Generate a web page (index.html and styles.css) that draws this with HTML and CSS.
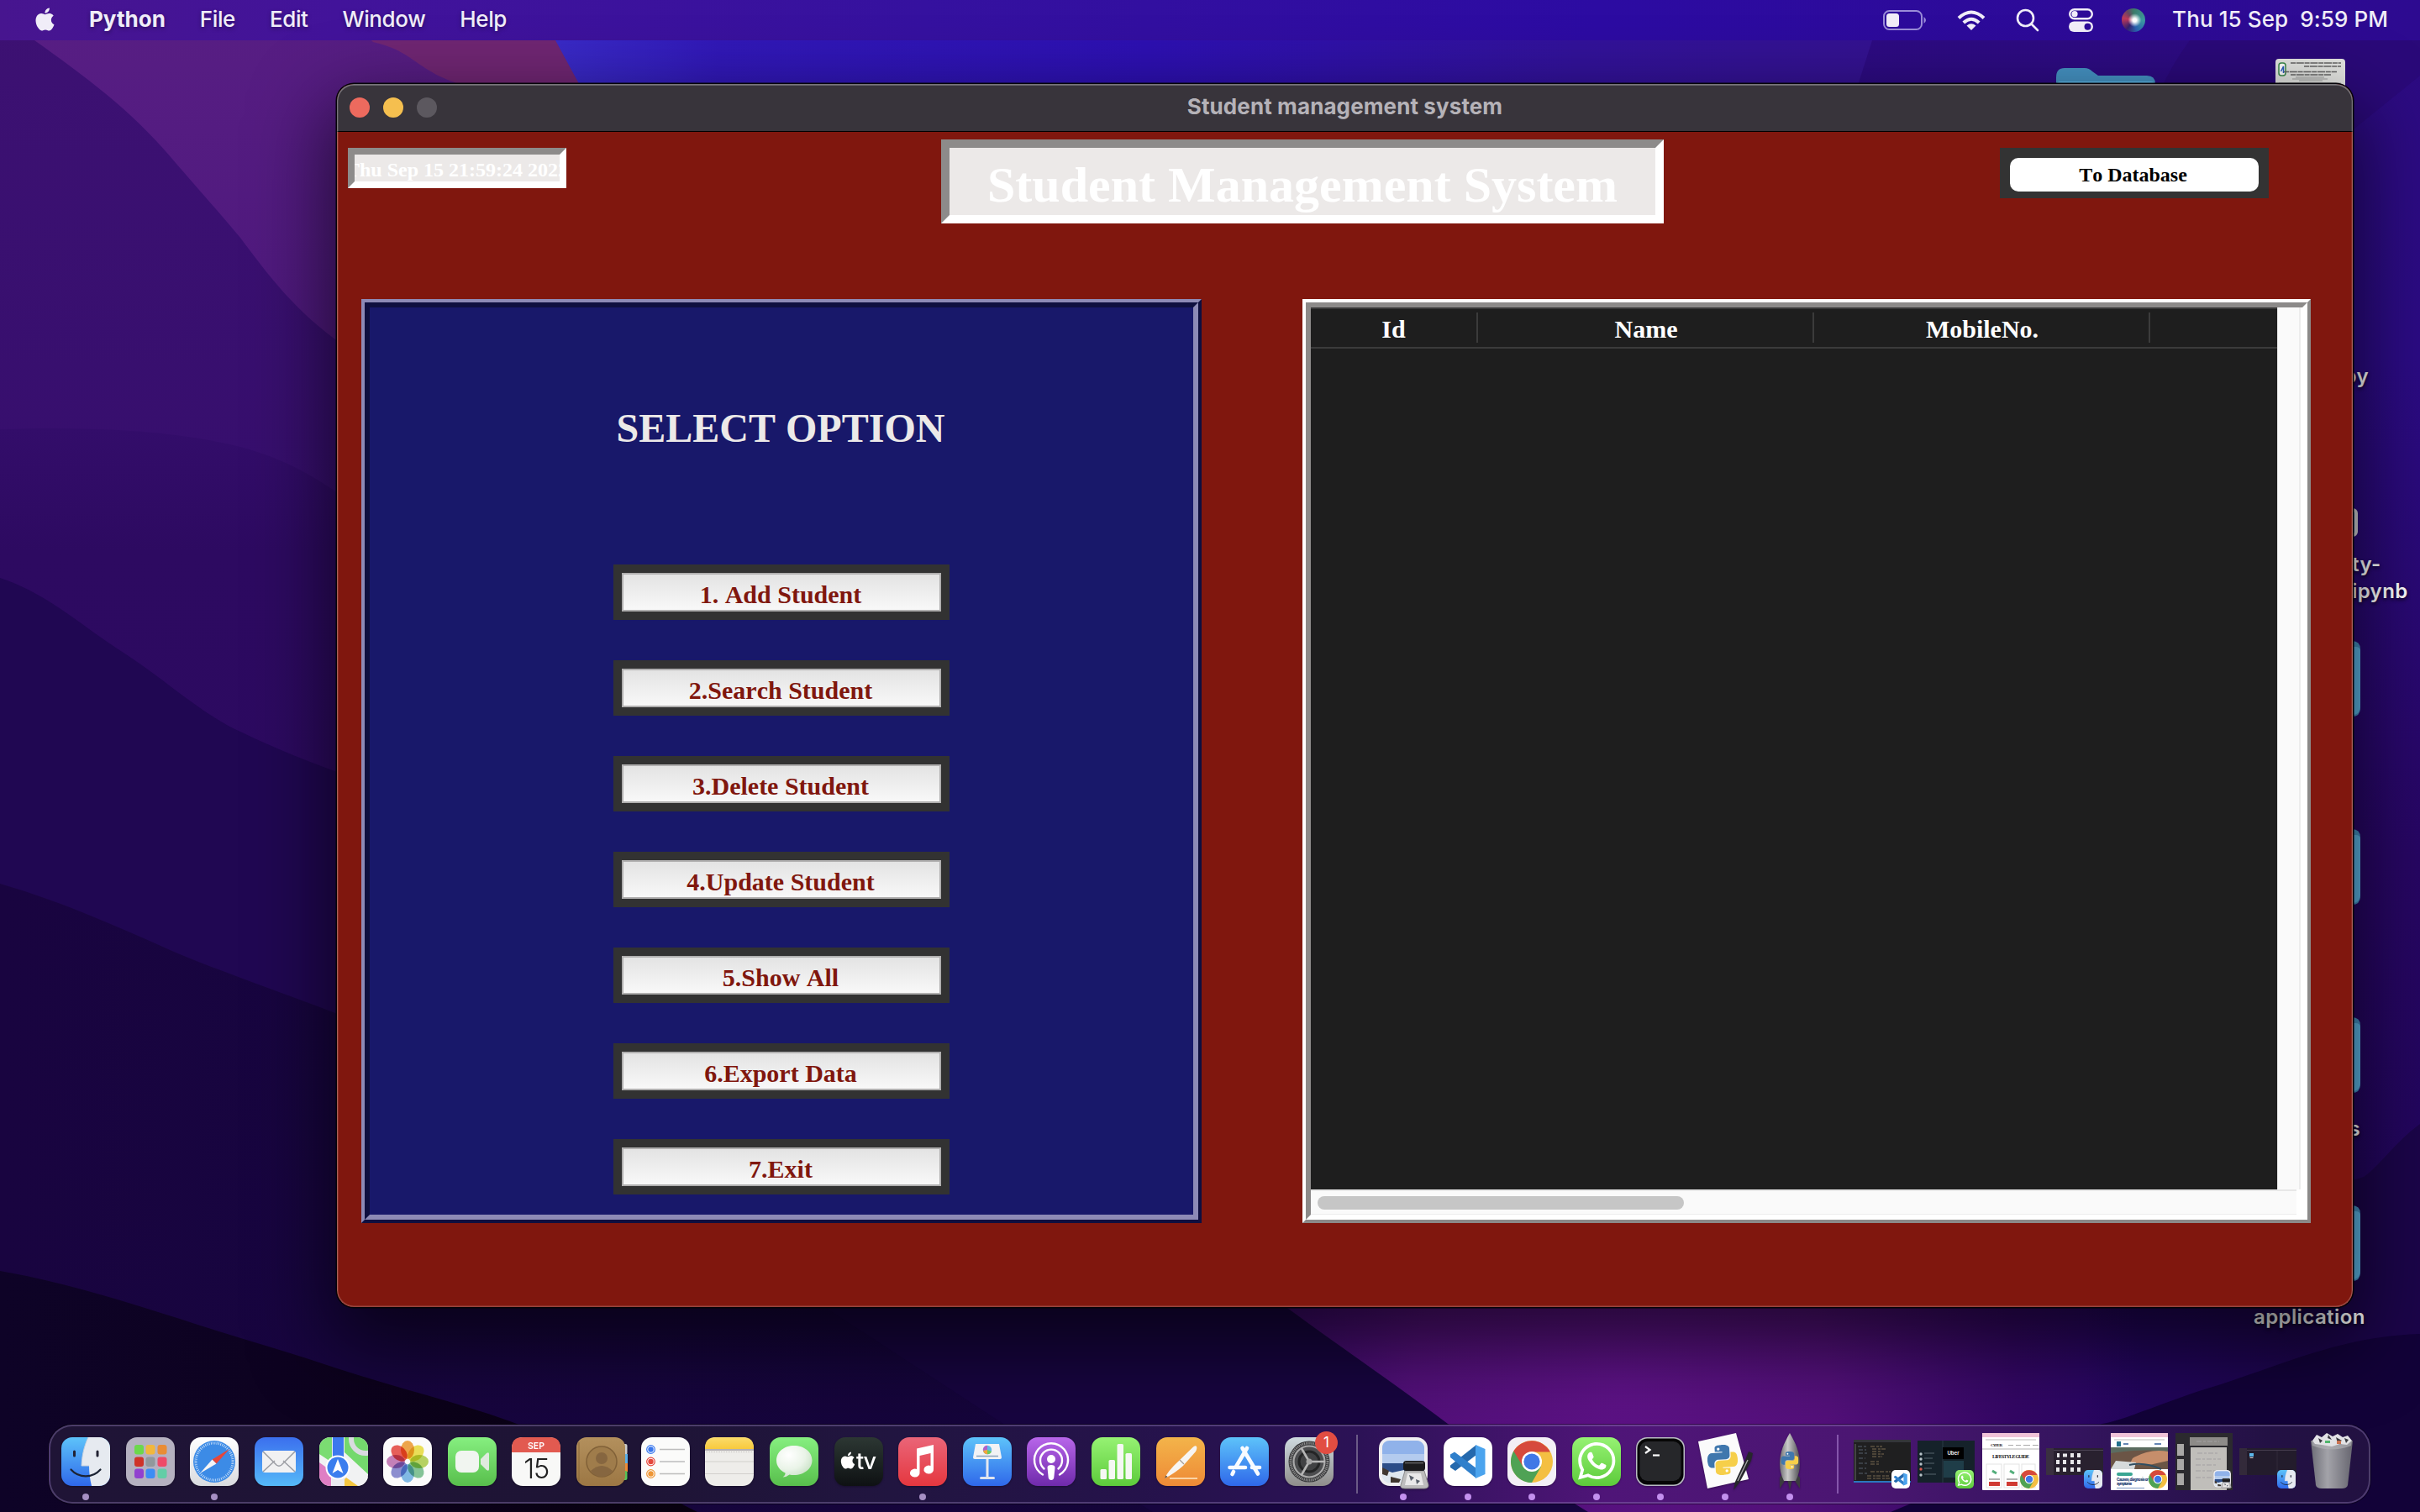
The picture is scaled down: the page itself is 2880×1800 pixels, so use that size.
FILE: index.html
```html
<!DOCTYPE html>
<html lang="en">
<head>
<meta charset="utf-8">
<title>Student management system</title>
<link rel="stylesheet" href="styles.css">
</head>
<body>
<svg class="wallpaper" viewBox="0 0 2880 1800" preserveAspectRatio="none" aria-hidden="true">
  <defs>
    <linearGradient id="wTop" x1="0" x2="1"><stop offset="0" stop-color="#3c30cc"/><stop offset=".15" stop-color="#3118b8"/><stop offset=".45" stop-color="#2d10b2"/><stop offset=".75" stop-color="#32129a"/><stop offset="1" stop-color="#34128f"/></linearGradient>
    <linearGradient id="wRight" x1="0" y1="0" x2="0" y2="1"><stop offset="0" stop-color="#2d0b82"/><stop offset=".25" stop-color="#2b0b84"/><stop offset=".6" stop-color="#270663"/><stop offset="1" stop-color="#1e0558"/></linearGradient>
    <linearGradient id="wPurple" x1="0" y1="0" x2="0" y2="1"><stop offset="0" stop-color="#581e84"/><stop offset="1" stop-color="#481678"/></linearGradient>
    <linearGradient id="wIndigo" x1="0" y1="0" x2="0" y2="1"><stop offset="0" stop-color="#3d1173"/><stop offset="1" stop-color="#350e6c"/></linearGradient>
    <linearGradient id="wBand1" x1="0" y1="0" x2="0" y2="1"><stop offset="0" stop-color="#330d6a"/><stop offset=".3" stop-color="#2d0a61"/><stop offset="1" stop-color="#2c0a60"/></linearGradient>
    <linearGradient id="wBand3" x1="0" y1="0" x2="1" y2="0"><stop offset="0" stop-color="#190440"/><stop offset=".25" stop-color="#17053f"/><stop offset="1" stop-color="#130436"/></linearGradient>
    <linearGradient id="wBand4" x1="0" y1="0" x2="1" y2="0"><stop offset="0" stop-color="#0e0327"/><stop offset=".4" stop-color="#0d0220"/><stop offset="1" stop-color="#08010f"/></linearGradient>
    <linearGradient id="wCorner" gradientUnits="userSpaceOnUse" x1="2480" y1="0" x2="2780" y2="0"><stop offset="0" stop-color="#1b0549" stop-opacity="0"/><stop offset="1" stop-color="#1b0549"/></linearGradient>
    <radialGradient id="wMag" gradientUnits="userSpaceOnUse" cx="1930" cy="1650" r="620"><stop offset="0" stop-color="#5d1286"/><stop offset=".4" stop-color="#521079"/><stop offset=".75" stop-color="#330764"/><stop offset="1" stop-color="#230560"/></radialGradient>
  </defs>
  <rect width="2880" height="1800" fill="#1b0645"/>
  <rect x="600" width="1700" height="400" fill="url(#wTop)"/>
  <path d="M2234 0L2228 48L2205 120V1700H2880V0Z" fill="url(#wRight)"/>
  <path d="M2640 0L2606 48Q2560 110 2530 220L2620 300 2880 90V0Z" fill="#270870" opacity=".5"/>
  <path d="M0 0H650L661 48L700 120V600H0Z" fill="#702673"/>
  <path d="M0 0H390L444 50C490 60 495 82 541 98L640 180V620H0Z" fill="url(#wPurple)"/>
  <path d="M0 0H15L41 48C100 90 155 130 204 188C240 230 262 254 286 283C320 328 350 370 410 412V700H0Z" fill="url(#wIndigo)"/>
  <path d="M0 511C90 508 200 510 286 532C340 546 380 570 420 600V1000H0Z" fill="url(#wBand1)"/>
  <path d="M0 688C60 708 100 748 153 781C200 812 240 850 286 871C330 892 370 908 420 926V1300H0Z" fill="#200752"/>
  <path d="M0 1052C80 1075 150 1108 214 1136C280 1163 350 1187 420 1214H1700V1800H0Z" fill="url(#wBand3)"/>
  <path d="M0 1513C80 1527 150 1550 214 1570C280 1592 340 1608 398 1628C470 1652 540 1668 607 1692C680 1718 760 1765 830 1800H0Z" fill="url(#wBand4)"/>
  <path d="M880 1480L983 1557L1194 1695L1359 1792L1372 1800H1900V1480Z" fill="#17053f"/>
  <path d="M1440 1480L1532 1557C1590 1600 1650 1640 1723 1695L1877 1792L1890 1800H2880V1400L2200 1480Z" fill="url(#wMag)"/>
  <path d="M2880 1338C2850 1360 2830 1390 2813 1401L2480 1500V1800H2880Z" fill="url(#wCorner)"/>
  <path d="M2880 1588C2830 1590 2795 1598 2755 1610S2670 1640 2627 1653S2530 1690 2502 1695L2250 1800H2880Z" fill="#120238"/>
</svg>

<svg class="defs" width="0" height="0" aria-hidden="true">
  <defs>
    <linearGradient id="gBlueUp" x1="0" y1="0" x2="0" y2="1"><stop offset="0" stop-color="#3b6fee"/><stop offset="1" stop-color="#55b9f8"/></linearGradient>
    <linearGradient id="gBlueDn" x1="0" y1="0" x2="0" y2="1"><stop offset="0" stop-color="#5dc3fa"/><stop offset="1" stop-color="#2f68ea"/></linearGradient>
    <linearGradient id="gWhite" x1="0" y1="0" x2="0" y2="1"><stop offset="0" stop-color="#fff"/><stop offset="1" stop-color="#d9dbdf"/></linearGradient>
    <linearGradient id="gGreen" x1="0" y1="0" x2="0" y2="1"><stop offset="0" stop-color="#86ef80"/><stop offset="1" stop-color="#58bf4c"/></linearGradient>
    <linearGradient id="gLime" x1="0" y1="0" x2="0" y2="1"><stop offset="0" stop-color="#96f273"/><stop offset="1" stop-color="#5dcb3b"/></linearGradient>
    <linearGradient id="gRed" x1="0" y1="0" x2="0" y2="1"><stop offset="0" stop-color="#ea6578"/><stop offset="1" stop-color="#e5373f"/></linearGradient>
    <linearGradient id="gOrange" x1="0" y1="0" x2="0" y2="1"><stop offset="0" stop-color="#f3b44a"/><stop offset="1" stop-color="#ee8a36"/></linearGradient>
    <linearGradient id="gPurple" x1="0" y1="0" x2="0" y2="1"><stop offset="0" stop-color="#b866ea"/><stop offset="1" stop-color="#6f2aab"/></linearGradient>
    <linearGradient id="gDark" x1="0" y1="0" x2="0" y2="1"><stop offset="0" stop-color="#2c3733"/><stop offset="1" stop-color="#0e1113"/></linearGradient>
    <linearGradient id="gTan" x1="0" y1="0" x2="0" y2="1"><stop offset="0" stop-color="#b3905d"/><stop offset="1" stop-color="#9c7744"/></linearGradient>
    <linearGradient id="gGrey" x1="0" y1="0" x2="0" y2="1"><stop offset="0" stop-color="#cfdbe0"/><stop offset="1" stop-color="#8f8d8b"/></linearGradient>
    <linearGradient id="gMetal" x1="0" y1="0" x2="1" y2="0"><stop offset="0" stop-color="#6c6c70"/><stop offset=".4" stop-color="#cacaca"/><stop offset="1" stop-color="#4e4e52"/></linearGradient>
    <linearGradient id="gYellow" x1="0" y1="0" x2="0" y2="1"><stop offset="0" stop-color="#fbdc6b"/><stop offset="1" stop-color="#f8c93d"/></linearGradient>
    <linearGradient id="gCan" x1="0" y1="0" x2="1" y2="0"><stop offset="0" stop-color="#6d6d76"/><stop offset=".4" stop-color="#a3a3a9"/><stop offset="1" stop-color="#66656f"/></linearGradient>
    <radialGradient id="gBall" cx=".35" cy=".3" r=".9"><stop offset="0" stop-color="#fff"/><stop offset=".5" stop-color="#eaf4e8"/><stop offset="1" stop-color="#b9d8b5"/></radialGradient>
    <clipPath id="squircle"><rect width="58" height="58" rx="13"/></clipPath>

    <symbol id="apple" viewBox="0 0 24 24"><path d="M12.152 6.896c-.948 0-2.415-1.078-3.96-1.04-2.04.027-3.91 1.183-4.961 3.014-2.117 3.675-.546 9.103 1.519 12.09 1.013 1.454 2.208 3.09 3.792 3.039 1.52-.065 2.09-.987 3.935-.987 1.831 0 2.35.987 3.96.948 1.637-.026 2.676-1.48 3.676-2.948 1.156-1.688 1.636-3.325 1.662-3.415-.039-.013-3.182-1.221-3.22-4.857-.026-3.04 2.48-4.494 2.597-4.559-1.429-2.09-3.623-2.324-4.39-2.376-2-.156-3.675 1.09-4.61 1.09zM15.53 3.83c.843-1.012 1.4-2.427 1.245-3.83-1.207.052-2.662.805-3.532 1.818-.78.896-1.454 2.338-1.273 3.714 1.338.104 2.715-.688 3.559-1.701"/></symbol>
    <symbol id="pysnake" viewBox="0 0 24 24"><path d="M14.25.18l.9.2.73.26.59.3.45.32.34.34.25.34.16.33.1.3.04.26.02.2-.01.13V8.5l-.05.63-.13.55-.21.46-.26.38-.3.31-.33.25-.35.19-.35.14-.33.1-.3.07-.26.04-.21.02H8.77l-.69.05-.59.14-.5.22-.41.27-.33.32-.27.35-.2.36-.15.37-.1.35-.07.32-.04.27-.02.21v3.06H3.17l-.21-.03-.28-.07-.32-.12-.35-.18-.36-.26-.36-.36-.35-.46-.32-.59-.28-.73-.21-.88-.14-1.05-.05-1.23.06-1.22.16-1.04.24-.87.32-.71.36-.57.4-.44.42-.33.42-.24.4-.16.36-.1.32-.05.24-.01h.16l.06.01h8.16v-.83H6.18l-.01-2.75-.02-.37.05-.34.11-.31.17-.28.25-.26.31-.23.38-.2.44-.18.51-.15.58-.12.64-.1.71-.06.77-.04.84-.02 1.27.05z"/></symbol>
    <symbol id="python" viewBox="0 0 24 24"><use href="#pysnake" fill="#3f77ad"/><g transform="rotate(180 12 12)"><use href="#pysnake" fill="#f6cf4a"/><circle cx="9" cy="3.2" r="1.1" fill="#fff"/></g><circle cx="9" cy="3.2" r="1.1" fill="#fff"/></symbol>
    <symbol id="finder" viewBox="0 0 58 58"><g clip-path="url(#squircle)"><rect width="58" height="58" fill="url(#gBlueDn)"/><path d="M32 0C27 11 24.500 22 24 34H33C33 42 34 50 36 58H58V0Z" fill="#e6eaf0"/><path d="M32 0C27 11 24.500 22 24 34H33" fill="none" stroke="#c8d2de" stroke-width="1"/></g><path d="M15.500 17V22M43 17V22" stroke="#223" stroke-width="3" stroke-linecap="round"/><path d="M11.500 38.500C21 49 37 49 46.500 38.500" fill="none" stroke="#1c2333" stroke-width="2.200" stroke-linecap="round"/></symbol>
    <symbol id="vscode" viewBox="0 0 58 58"><rect width="58" height="58" rx="13" fill="#fff"/><path d="M39 9V21L14 40L8 36V33.500Z" fill="#2569ad"/><path d="M8 20.500L13 17.500L39 37V49L8 24Z" fill="#2f7fcb"/><path d="M38 9L49.500 14V44L38 49Z" fill="#4ba4ee"/></symbol>
    <symbol id="chromeball" viewBox="0 0 50 50"><circle cx="25" cy="25" r="25" fill="#f4bf42"/><path d="M25 25L3.350 12.500A25 25 0 0 0 25 50L36 31Z" fill="#4fa255"/><path d="M25 13.500H46.800A25 25 0 0 0 3.350 12.500L14.500 31Z" fill="#d64a3c"/><circle cx="25" cy="25" r="12" fill="#fff"/><circle cx="25" cy="25" r="9.600" fill="#4078e6"/></symbol>
    <symbol id="whatsapp" viewBox="0 0 58 58"><rect width="58" height="58" rx="13" fill="url(#gLime)"/><path transform="translate(7 6) scale(1.850)" fill="#fff" d="M17.472 14.382c-.297-.149-1.758-.867-2.030-.967-.273-.099-.471-.148-.670.150-.197.297-.767.966-.940 1.164-.173.199-.347.223-.644.075-.297-.150-1.255-.463-2.390-1.475-.883-.788-1.480-1.761-1.653-2.059-.173-.297-.018-.458.130-.606.134-.133.298-.347.446-.520.149-.174.198-.298.298-.497.099-.198.050-.371-.025-.520-.075-.149-.669-1.612-.916-2.207-.242-.579-.487-.500-.669-.510-.173-.008-.371-.010-.570-.010-.198 0-.520.074-.792.372-.272.297-1.040 1.016-1.040 2.479 0 1.462 1.065 2.875 1.213 3.074.149.198 2.096 3.200 5.077 4.487.709.306 1.262.489 1.694.625.712.227 1.360.195 1.871.118.571-.085 1.758-.719 2.006-1.413.248-.694.248-1.289.173-1.413-.074-.124-.272-.198-.570-.347m-5.421 7.403h-.004a9.870 9.870 0 01-5.031-1.378l-.361-.214-3.741.982.998-3.648-.235-.374a9.860 9.860 0 01-1.510-5.260c.001-5.450 4.436-9.884 9.888-9.884 2.640 0 5.122 1.030 6.988 2.898a9.825 9.825 0 012.893 6.994c-.003 5.450-4.437 9.884-9.885 9.884m8.413-18.297A11.815 11.815 0 0012.050 0C5.495 0 .160 5.335.157 11.892c0 2.096.547 4.142 1.588 5.945L.057 24l6.305-1.654a11.882 11.882 0 005.683 1.448h.005c6.554 0 11.890-5.335 11.893-11.893a11.821 11.821 0 00-3.480-8.413z"/></symbol>
    <symbol id="preview" viewBox="0 0 60 62"><rect width="58" height="58" rx="13" fill="#f0eff2"/><rect x="4" y="4" width="50" height="50" rx="9" fill="#b4cbee"/><path d="M4 13C4 7 8 4 13 4H45C50 4 54 8 54 13V20H4Z" fill="#90b2ea"/><path d="M4 31H54V45H4Z" fill="#2c4d88"/><path d="M4 38L16 42L30 39L36 54H13C8 54 4 50 4 45Z" fill="#dfe7ee"/><path d="M4 36L12 40L10 46L4 44ZM14 47L26 50L24 54H14Z" fill="#40372f"/><path d="M31 40H54L59 57Q59 61 54 61H31Q25 61 26 57Z" fill="#bdbdbd" stroke="#8d8d8d"/><path d="M34 43H50L53 57H31Z" fill="#e9e9e9"/><path d="M36 45L42 48L38 52ZM44 50L49 52L45 56ZM33 53L38 55" fill="#59606b"/><rect x="29" y="28" width="26" height="12" rx="3.500" fill="#1b1b1d"/><path d="M31 30.500H53" stroke="#555" stroke-width="2"/></symbol>
    <symbol id="folder" viewBox="0 0 118 100"><path d="M0 12Q0 1 10 1H34Q39 1 43 5L50 10H108Q118 10 118 20V90Q118 100 108 100H10Q0 100 0 90Z" fill="#4593c4"/><path d="M0 22Q0 17 6 17H112Q118 17 118 22V88Q118 98 108 98H10Q0 98 0 88Z" fill="#5eb9e9"/></symbol>
  </defs>
</svg>

<div class="desk-items">
  <svg class="desk-folder f0"><use href="#folder"/></svg>
  <svg class="desk-doc" viewBox="0 0 83 60"><rect width="83" height="70" rx="4" fill="#e4e5e2"/><rect x="4" y="5" width="8" height="15" rx="3" fill="#fff" stroke="#3b8a4a" stroke-width="1.500"/><path d="M6.500 15L9.500 9V17" fill="none" stroke="#2b5fc0" stroke-width="1.500"/><g stroke="#666" stroke-width="1.400" stroke-dasharray="6 .8 9 .8"><path d="M18 5H78M34 9H78M10 15.500H73M18 19H66" /></g><g stroke="#999" stroke-width=".9"><path d="M24 22H58M20 24H62M28 26H56M4 29H78"/></g></svg>
  <svg class="desk-folder f1"><use href="#folder"/></svg>
  <svg class="desk-folder f2"><use href="#folder"/></svg>
  <svg class="desk-folder f3"><use href="#folder"/></svg>
  <svg class="desk-folder f4"><use href="#folder"/></svg>
  <span class="desk-drive"></span>
  <span class="desk-label l1">py</span>
  <span class="desk-label l2">ty-<br>ipynb</span>
  <span class="desk-label l3">s</span>
  <span class="desk-label l4">application</span>
</div>

<header class="menubar">
  <nav class="menus">
    <svg class="apple-logo"><use href="#apple"/></svg>
    <span class="app-name">Python</span><span>File</span><span>Edit</span><span>Window</span><span>Help</span>
  </nav>
  <div class="status">
    <svg width="52" height="24" viewBox="0 0 52 24"><rect x="1" y="1" width="45" height="22" rx="6.500" fill="none" stroke="#9a8cd8" stroke-width="2"/><path d="M48.500 8Q51 10 51 12T48.500 16Z" fill="#9a8cd8"/><rect x="4" y="4" width="15" height="16" rx="3.500" fill="#f0edf8"/></svg>
    <svg class="wifi" width="34" height="25" viewBox="0 0 34 25" fill="none" stroke="#f0edf8" stroke-width="4"><path d="M2 9.500Q17-4.500 32 9.500M7.800 15Q17 6.500 26.200 15"/><path d="M17 24L11.500 18.500Q17 14 22.500 18.500Z" fill="#f0edf8" stroke="none"/></svg>
    <svg class="search" width="28" height="28" viewBox="0 0 28 28" fill="none" stroke="#f0edf8" stroke-width="2.600" stroke-linecap="round"><circle cx="11.500" cy="11.500" r="9.500"/><path d="M18.500 18.500L26 26"/></svg>
    <svg class="control" width="29" height="28" viewBox="0 0 29 28"><rect x="1.200" y="1.200" width="26.600" height="11" rx="5.500" fill="none" stroke="#f0edf8" stroke-width="2.400"/><circle cx="7" cy="6.700" r="3.600" fill="#f0edf8"/><rect y="15.500" width="29" height="12.500" rx="6.200" fill="#f0edf8"/><circle cx="22.500" cy="21.700" r="4" fill="#2c0b98"/></svg>
    <span class="siri"></span>
    <span class="clock">Thu 15 Sep&nbsp; 9:59 PM</span>
  </div>
</header>

<main class="window">
  <div class="titlebar">
    <div class="lights"><i class="close"></i><i class="mini"></i><i class="full"></i></div>
    <h1>Student management system</h1>
  </div>
  <div class="client">
    <div class="top">
      <div class="stamp"><span>Thu Sep 15 21:59:24 2022</span></div>
      <div class="banner">Student Management System</div>
      <div class="db-wrap"><button class="db">To Database</button></div>
    </div>
    <div class="panels">
      <section class="ridge blue"><div class="ridge-in options">
        <h2>SELECT OPTION</h2>
        <div class="buttons">
          <button>1. Add Student</button>
          <button>2.Search Student</button>
          <button>3.Delete Student</button>
          <button>4.Update Student</button>
          <button>5.Show All</button>
          <button>6.Export Data</button>
          <button>7.Exit</button>
        </div>
      </div></section>
      <section class="ridge white"><div class="ridge-in tree">
        <div class="table">
          <div class="thead"><span class="id">Id</span><span>Name</span><span>MobileNo.</span></div>
        </div>
        <div class="vbar"></div>
        <div class="hbar"><div class="thumb"></div></div>
      </div></section>
    </div>
  </div>
</main>

<footer class="dock">
  <div class="group">
    <div class="slot run"><svg viewBox="0 0 58 58"><use href="#finder"/></svg></div>
    <div class="slot"><svg viewBox="0 0 58 58"><rect width="58" height="58" rx="13" fill="#b5b1c0"/><g><rect x="10" y="9" width="11" height="11.500" rx="3" fill="#6cd84c"/><rect x="23.500" y="9" width="11" height="11.500" rx="3" fill="#f1b73d"/><rect x="37.500" y="9" width="11" height="11.500" rx="3" fill="#e98c35"/><rect x="10" y="23.500" width="11" height="11.500" rx="3" fill="#cf3329"/><rect x="23.500" y="23.500" width="11" height="11.500" rx="3" fill="#91989c"/><rect x="37.500" y="23.500" width="11" height="11.500" rx="3" fill="#ee4a68"/><rect x="10" y="37.500" width="11" height="11.500" rx="3" fill="#9141cf"/><rect x="23.500" y="37.500" width="11" height="11.500" rx="3" fill="#3c8df5"/><rect x="37.500" y="37.500" width="11" height="11.500" rx="3" fill="#63cda6"/></g></svg></div>
    <div class="slot run"><svg viewBox="0 0 58 58"><rect width="58" height="58" rx="13" fill="url(#gWhite)"/><circle cx="29" cy="29" r="25" fill="#3c8be6"/><circle cx="29" cy="29" r="22" fill="none" stroke="#d9e9fb" stroke-width="3" stroke-dasharray=".8 1.500"/><path d="M47 14L31.500 31.500L26.500 26.500Z" fill="#e6463b"/><path d="M12 43L26.500 26.500L31.500 31.500Z" fill="#f4f4f6"/></svg></div>
    <div class="slot"><svg viewBox="0 0 58 58"><rect width="58" height="58" rx="13" fill="url(#gBlueUp)"/><rect x="9" y="16" width="40" height="26" rx="3.500" fill="#f1f1f2"/><path d="M10 41L24 28M48 41L34 28M10 17L26 33Q29 35.500 32 33L48 17" fill="none" stroke="#9b9da3" stroke-width="1.500"/></svg></div>
    <div class="slot"><svg viewBox="0 0 58 58"><g clip-path="url(#squircle)"><rect width="58" height="58" fill="#f1f2f3"/><path d="M0 0H15V30L0 20Z" fill="#7bdc72"/><path d="M0 30L14 40V58H0Z" fill="#df7fc4"/><path d="M30 0H58V44L30 18Z" fill="#74d96d"/><path d="M30 24L58 48V58H30Z" fill="#f1f2f3"/><path d="M32 48L46 58H30V50Z" fill="#f5c741"/><path d="M15 0H30V58H15Z" fill="#e9ebf0"/><path d="M16 0H29V30H16Z" fill="#3c79ee"/><circle cx="55" cy="2" r="17" fill="none" stroke="#d9dbe0" stroke-width="6"/></g><circle cx="22" cy="36" r="14.500" fill="#fff"/><circle cx="22" cy="36" r="12.500" fill="#3b7eee"/><path d="M22 26L28.500 43L22 39L15.500 43Z" fill="#fff"/></svg></div>
    <div class="slot"><svg viewBox="0 0 58 58"><rect width="58" height="58" rx="13" fill="#fbfbfb"/><g class="petals" transform="translate(29 29)"><ellipse cy="-14" rx="8" ry="11" fill="#f0a13c"/><ellipse cy="-14" rx="8" ry="11" fill="#ece04a" transform="rotate(45)"/><ellipse cy="-14" rx="8" ry="11" fill="#b3d255" transform="rotate(90)"/><ellipse cy="-14" rx="8" ry="11" fill="#7cc191" transform="rotate(135)"/><ellipse cy="-14" rx="8" ry="11" fill="#78b6e6" transform="rotate(180)"/><ellipse cy="-14" rx="8" ry="11" fill="#8487cf" transform="rotate(225)"/><ellipse cy="-14" rx="8" ry="11" fill="#c277b5" transform="rotate(270)"/><ellipse cy="-14" rx="8" ry="11" fill="#e9524c" transform="rotate(315)"/></g></svg></div>
    <div class="slot"><svg viewBox="0 0 58 58"><rect width="58" height="58" rx="13" fill="url(#gGreen)"/><rect x="9" y="16" width="28" height="26" rx="7" fill="#f1f5f0"/><path d="M39 26L46 19Q49 17 49 20V38Q49 41 46 39L39 32Z" fill="#e0eade"/></svg></div>
    <div class="slot"><svg viewBox="0 0 58 58"><rect width="58" height="58" rx="13" fill="#f8f8f7"/><path d="M0 18V13Q0 0 13 0H45Q58 0 58 13V18Z" fill="#e25a50"/><text x="29" y="14" text-anchor="middle" class="i-sep">SEP</text><text x="29" y="49" text-anchor="middle" class="i-day">15</text></svg></div>
    <div class="slot"><svg class="wide" viewBox="0 0 62 58"><rect x="52" y="8" width="8.500" height="13" rx="2" fill="#ccc"/><rect x="52" y="20" width="9" height="11" fill="#5bb0e8"/><rect x="52" y="31" width="9" height="10" fill="#ee8b35"/><rect x="52" y="40" width="8.500" height="11" rx="2" fill="#58c456"/><rect width="58" height="58" rx="12" fill="url(#gTan)"/><path d="M3 6V52" stroke="#8a6838" stroke-width="1"/><circle cx="30" cy="29" r="18" fill="#9f7c4b" stroke="#816138" stroke-width="1.500"/><circle cx="30" cy="25" r="7" fill="#866640"/><path d="M17 40Q30 28 43 40Q38 47 30 47T17 40Z" fill="#866640"/></svg></div>
    <div class="slot"><svg viewBox="0 0 58 58"><rect width="58" height="58" rx="13" fill="#fbfbfa"/><path d="M22 14.500H52M22 29H52M22 43.500H52" stroke="#bdbdbd" stroke-width="1.300"/><g fill="#fff" stroke-width="1.200"><circle cx="11.500" cy="14.500" r="4.800" stroke="#3a78ee"/><circle cx="11.500" cy="29" r="4.800" stroke="#e5483d"/><circle cx="11.500" cy="43.500" r="4.800" stroke="#ee9636"/></g><circle cx="11.500" cy="14.500" r="3.200" fill="#3a78ee"/><circle cx="11.500" cy="29" r="3.200" fill="#e5483d"/><circle cx="11.500" cy="43.500" r="3.200" fill="#ee9636"/></svg></div>
    <div class="slot"><svg viewBox="0 0 58 58"><rect width="58" height="58" rx="13" fill="#eeedea"/><path d="M0 14V13Q0 0 13 0H45Q58 0 58 13V14Z" fill="url(#gYellow)"/><path d="M0 15H58" stroke="#b3b0b2" stroke-width="2"/><path d="M1 17.500H57" stroke="#c4c1bd" stroke-width="1" stroke-dasharray="1 1"/><path d="M0 29H58M0 43.500H58" stroke="#d2d0cc"/></svg></div>
    <div class="slot"><svg viewBox="0 0 58 58"><rect width="58" height="58" rx="13" fill="url(#gGreen)"/><path d="M29 10C41 10 50.500 17.500 50.500 27.500S41 45 29 45Q26 45 23.500 44.500Q20 47.500 15.500 47.500Q19 45 18.500 42.500C12 39.500 8 34 8 27.500C8 17.500 17 10 29 10Z" fill="url(#gBall)"/></svg></div>
    <div class="slot"><svg viewBox="0 0 58 58"><rect width="58" height="58" rx="13" fill="url(#gDark)"/><use href="#apple" x="6" y="17" width="20" height="21" fill="#fff"/><text x="26" y="38" class="i-tv" textLength="24">tv</text></svg></div>
    <div class="slot run"><svg viewBox="0 0 58 58"><rect width="58" height="58" rx="13" fill="url(#gRed)"/><path d="M22 13.500L42 9V38A5.800 5 0 1 1 38.500 34V19L25.500 22V42A5.800 5 0 1 1 22 38Z" fill="#fff"/></svg></div>
    <div class="slot"><svg viewBox="0 0 58 58"><rect width="58" height="58" rx="13" fill="url(#gBlueDn)"/><path d="M15 8H43L46 24Q46 26 44 26H14Q12 26 12 24Z" fill="#f1f2f5"/><path d="M16 22.500H42" stroke="#8aa3bf" stroke-width="1.500"/><circle cx="29" cy="15" r="5.200" fill="#5fb7e8"/><path d="M29 15V9.800A5.200 5.200 0 0 0 24 16Z" fill="#b25fc9"/><path d="M29 15L24 16A5.200 5.200 0 0 0 29 20.200Z" fill="#f1a43d"/><path d="M29 15V20.200A5.200 5.200 0 0 0 34 17Z" fill="#6ccb5d"/><path d="M29 26V48" stroke="#e4e8f0" stroke-width="3"/><rect x="20" y="47" width="18" height="3" rx="1.500" fill="#dfe4ee"/></svg></div>
    <div class="slot"><svg viewBox="0 0 58 58"><rect width="58" height="58" rx="13" fill="url(#gPurple)"/><g fill="none" stroke="#fff" stroke-width="2.400" stroke-linecap="round"><path d="M19 44.500A20 20 0 1 1 39 44.500"/><path d="M20.500 37.500A13 13 0 1 1 37.500 37.500"/></g><circle cx="29" cy="26" r="5" fill="#fff"/><path d="M24.500 36Q24.500 33 29 33T33.500 36L32.300 48Q31.800 51 29 51T25.700 48Z" fill="#fff"/></svg></div>
    <div class="slot"><svg viewBox="0 0 58 58"><rect width="58" height="58" rx="13" fill="url(#gLime)"/><g fill="#f5f8f3"><rect x="10.500" y="38" width="7.500" height="12" rx="1.500"/><rect x="20.500" y="27" width="7.500" height="23" rx="1.500"/><rect x="30.500" y="8" width="7.500" height="42" rx="1.500"/><rect x="40.500" y="19" width="7.500" height="31" rx="1.500"/></g></svg></div>
    <div class="slot"><svg viewBox="0 0 58 58"><rect width="58" height="58" rx="13" fill="url(#gOrange)"/><path d="M16 49H49" stroke="#fbd4a4" stroke-width="2"/><path d="M43 12.500Q46.500 9 48 11Q49 13 47 17L32 34Q22 43 10 49Q14 40 26 29Z" fill="#f7f5f2"/><path d="M28 27L33 32" stroke="#a39c95" stroke-width="1.200"/><path d="M10 49L11.500 45.500L13.500 47Z" fill="#554b44"/></svg></div>
    <div class="slot"><svg viewBox="0 0 58 58"><rect width="58" height="58" rx="13" fill="url(#gBlueDn)"/><g stroke="#f8fbff" stroke-width="4.600" stroke-linecap="round"><path d="M26.500 13L45 43.500M32 13L19 35M16 41L14.500 44M11.500 36H30M38 36H47"/></g></svg></div>
    <div class="slot"><svg viewBox="0 0 58 58"><rect width="58" height="58" rx="13" fill="url(#gGrey)"/><circle cx="29" cy="29" r="24.500" fill="#38393b"/><circle cx="29" cy="29" r="22" fill="none" stroke="#8d8d8d" stroke-width="3" stroke-dasharray="1.200 1"/><circle cx="29" cy="29" r="18.500" fill="#4c4d4f" stroke="#a9a9a9" stroke-width="2.200"/><circle cx="29" cy="29" r="12" fill="#414244" stroke="#242526" stroke-width="3"/><path d="M29 29L19.500 12.500M29 29H48M29 29L19.500 45.500" stroke="#b5b5b5" stroke-width="2.600"/><circle cx="29" cy="29" r="3.500" fill="#a5a5a5"/></svg><b class="badge">1</b></div>
  </div>
  <i class="rule r1"></i>
  <div class="group">
    <div class="slot run"><svg class="tall" viewBox="0 0 60 62"><use href="#preview"/></svg></div>
    <div class="slot run"><svg viewBox="0 0 58 58"><use href="#vscode"/></svg></div>
    <div class="slot run"><svg viewBox="0 0 58 58"><rect width="58" height="58" rx="13" fill="#f3eff6"/><use href="#chromeball" x="4" y="4" width="50" height="50"/></svg></div>
    <div class="slot run"><svg viewBox="0 0 58 58"><use href="#whatsapp"/></svg></div>
    <div class="slot run"><svg viewBox="0 0 58 58"><rect width="58" height="58" rx="13" fill="#b9bcc2"/><rect x="1.500" y="1.500" width="55" height="55" rx="12" fill="#060606"/><rect x="4.500" y="5" width="49" height="47" rx="9" fill="#26272a"/><path d="M11 11L16.500 15L11 19" fill="none" stroke="#fff" stroke-width="2.200"/><path d="M20 21.500H28" stroke="#fff" stroke-width="2.200"/></svg></div>
    <div class="slot run"><svg class="over" viewBox="0 0 70 70"><path d="M1 11L46 1L61 56L12 67Z" fill="#fbfbfb"/><use href="#python" x="11" y="15" width="38" height="36" transform="rotate(-3 30 33)"/><path d="M61 23L66 25L64 34L50 60L43 69L45 59L57 33Z" fill="#26272b"/><path d="M60 33L48 58" stroke="#aaa" stroke-width="1.300"/></svg></div>
    <div class="slot run"><svg class="over2" viewBox="0 0 58 70"><path d="M21 49L17 54V67L23 58ZM36 49L41 54V67L35 58ZM26 56H32L29 69Z" fill="#3b3b3f"/><path d="M29 1C36 13 41 24 41 38Q41 48 36 58H22Q17 48 17 38C17 24 22 13 29 1Z" fill="url(#gMetal)"/><use href="#python" x="18.500" y="21" width="21" height="25"/></svg></div>
  </div>
  <i class="rule r2"></i>
  <div class="thumbs">
    <div class="mini-win"><svg width="68" height="52" viewBox="0 0 68 52"><rect width="68" height="50" fill="#1f1f20"/><rect width="68" height="3" fill="#34353a"/><rect y="49" width="68" height="2" fill="#2a78bd"/><path d="M2 5V48" stroke="#444" stroke-width="2"/><g stroke-width="1" stroke-dasharray="5 2 3 1"><path stroke="#56606c" d="M5 8H16M6 12H15M6 16H17M6 22H14M6 28H16M6 34H15M6 40H16"/><path stroke="#7a6b50" d="M20 8H34M22 11H38M22 14H32M22 17H36M22 20H34M20 26H30M20 29H31M20 38H44M16 43H42M16 46H48"/></g></svg><svg class="mark"><use href="#vscode"/></svg></div>
    <div class="mini-win"><svg width="68" height="50" viewBox="0 0 68 50"><rect width="68" height="50" fill="#15222a"/><path d="M30 0V50" stroke="#2b3b44"/><rect x="30" y="8" width="25" height="14" fill="#000"/><text x="42.500" y="17" text-anchor="middle" class="i-uber">Uber</text><rect x="31" y="24" width="24" height="20" fill="#1f3d48"/><g fill="#b7c3c8"><circle cx="4" cy="16" r="1.700"/><circle cx="4" cy="22" r="1.700"/><circle cx="4" cy="28" r="1.700"/><circle cx="4" cy="34" r="1.700" fill="#db5a4e"/><circle cx="4" cy="41" r="1.700"/></g><path d="M8 15H20M8 21H18M8 27H20M8 33H17M8 40H22" stroke="#56656d" stroke-width="1"/></svg><svg class="mark"><use href="#whatsapp"/></svg></div>
    <div class="mini-win"><svg width="68" height="68" viewBox="0 0 68 68"><rect width="68" height="68" rx="1" fill="#fff"/><rect width="68" height="5" fill="#f0c3d8"/><path d="M4 8H64" stroke="#dedede" stroke-width="2"/><path d="M0 19H68" stroke="#b5b5b5"/><text x="10" y="16" class="i-serif" textLength="14">CYFER</text><path d="M31 14.500H37M40 14.500H46M49 14.500H57M60 14.500H67" stroke="#aaa" stroke-width="1.200"/><text x="12" y="29.500" class="i-serif big" textLength="44">LIFESTYLE GUIDE</text><g fill="#fff" stroke="#e3e3e3"><rect x="5" y="37" width="18" height="28"/><rect x="26" y="37" width="18" height="28"/><rect x="47" y="37" width="16" height="28"/></g><path d="M12 45L17 48M33 45L38 48" stroke="#53ae7b" stroke-width="3"/><path d="M8 55H21M29 55H42" stroke="#666" stroke-width="1.200"/><rect x="8" y="58" width="13" height="5" fill="#d03a33"/><rect x="29" y="58" width="13" height="5" fill="#d03a33"/></svg><svg class="mark"><use href="#chromeball"/></svg></div>
    <div class="mini-win"><svg width="68" height="32" viewBox="0 0 68 32"><rect width="68" height="32" fill="#29212f"/><rect width="9" height="32" fill="#3a3040"/><path d="M9 2.500H68" stroke="#4a4252" stroke-width="1"/><g fill="#e8e8ea"><path d="M13 6h3v5h-3zM20 6.500h5v4h-5zM29 6h4v5h-4zM37 6h4v5h-4zM12 14h4v5h-4zM20 14h4v5h-4zM29 14h4v5h-4zM37 14h4v5h-4zM12 23h4v5h-4zM20 23h4v5h-4zM29 23h4v5h-4zM37 23h4v5h-4z"/></g></svg><svg class="mark"><use href="#finder"/></svg></div>
    <div class="mini-win"><svg width="68" height="68" viewBox="0 0 68 68"><rect width="68" height="68" rx="1" fill="#fff"/><rect width="68" height="5" fill="#f0c3d8"/><path d="M4 8H64" stroke="#dedede" stroke-width="2"/><rect x="7" y="10" width="5" height="6" fill="#22708c"/><path d="M15 13H21M52 13H60" stroke="#355f9d" stroke-width="1.500"/><rect y="17" width="68" height="26" fill="#6b5546"/><path d="M0 17H68V22Q40 18 0 24Z" fill="#5b6c60"/><path d="M68 22Q46 18 26 30L22 38L46 38L68 33Z" fill="#c68e6b"/><path d="M6 33L30 35L28 43H0Z" fill="#d6dadb"/><path d="M22 38Q40 34 60 43" stroke="#2f4d60" stroke-width="2" fill="none"/><rect x="7" y="47" width="19" height="4" rx="2" fill="#3aa693"/><text x="7" y="57" class="i-sans" textLength="38">Causes, diagnosis or</text><text x="7" y="62" class="i-sans" textLength="18">symptoms</text><path d="M7 65.500H40" stroke="#7d98c2"/></svg><svg class="mark"><use href="#chromeball"/></svg></div>
    <div class="mini-win"><svg width="68" height="68" viewBox="0 0 68 68"><rect width="68" height="68" fill="#2b2a2e"/><rect x="17" y="5" width="45" height="10" fill="#8d8b88"/><rect x="18" y="17" width="43" height="51" fill="#c0beba"/><g stroke="#a3a0a2" stroke-width="1" stroke-dasharray="6 2 3 2"><path d="M25 10H52M26 24H52M24 31H54M24 38H50M24 45H50M24 53H46"/></g><g fill="#a9a8a6"><rect x="2" y="13" width="8" height="14"/><rect x="2" y="31" width="8" height="13"/><rect x="2" y="48" width="8" height="14"/></g></svg><svg class="mark"><use href="#preview"/></svg></div>
    <div class="mini-win"><svg width="68" height="32" viewBox="0 0 68 32"><rect width="68" height="32" fill="#231c2c"/><rect width="9" height="32" fill="#332a3a"/><path d="M9 2.500H68" stroke="#443b4d" stroke-width="1"/><path d="M45 3V32" stroke="#322a3a"/><rect x="12" y="6" width="5" height="4" fill="#5cb7ea"/><rect x="12.500" y="11" width="4" height="1" fill="#ddd"/></svg><svg class="mark"><use href="#finder"/></svg></div>
  </div>
  <svg class="trash" width="52" height="68" viewBox="0 0 52 68"><path d="M1 9H51L45 62Q44 66 38 66H14Q8 66 7 62Z" fill="url(#gCan)"/><path d="M2 9Q26 20 50 9L49 15Q26 24 3 15Z" fill="#b5b5b9" opacity=".6"/><path d="M3 9L8 2L14 5L20 0L27 4L33 1L39 5L45 3L50 9L44 14L36 13L26 16L14 14L6 13Z" fill="#e2e2e5"/><path d="M10 6L15 9L12 12ZM31 5L38 9L33 12ZM22 2L26 8L21 6ZM41 6L46 8L43 12Z" fill="#3a3b40"/><path d="M18 9H24V12H18Z" fill="#51b56c"/><path d="M32 9H37V13H32Z" fill="#cb7352"/></svg>
</footer>
</body>
</html>
```
FILE: styles.css
```css
* { box-sizing: border-box; }
html, body { margin: 0; width: 2880px; height: 1800px; overflow: hidden; }
body {
  position: relative;
  background: #1b0645;
  font-family: Inter, "Liberation Sans", sans-serif;
}
svg { display: block; }
button { font: inherit; color: inherit; margin: 0; border: 0; padding: 0; }

.wallpaper { position: absolute; left: 0; top: 0; width: 2880px; height: 1800px; }
.defs { position: absolute; }

/* Desktop icons, partly hidden under the window */
.desk-items { position: absolute; inset: 0; }
.desk-folder { position: absolute; width: 118px; height: 100px; left: 2691px; }
.f0 { left: 2447px; top: 80px; }
.f1 { top: 753px; }
.f2 { top: 977px; }
.f3 { top: 1201px; }
.f4 { top: 1425px; }
.desk-doc { position: absolute; left: 2708px; top: 70px; width: 83px; height: 60px; }
.desk-drive {
  position: absolute; left: 2760px; top: 605px; width: 46px; height: 34px;
  border: 4px solid #d8d8da; border-radius: 6px; background: #3f86c4;
}
.desk-label {
  position: absolute; color: #fff; font-size: 24px; font-weight: 600; line-height: 32px; letter-spacing: .4px;
  text-shadow: 0 2px 4px rgba(0, 0, 0, .8);
}
.l1 { right: 61px; top: 432px; }
.l2 { left: 2799px; top: 656px; }
.l3 { right: 71px; top: 1328px; }
.l4 { left: 2682px; top: 1552px; }

.menubar {
  position: relative; height: 48px; padding: 0 38px 0 40px;
  display: flex; justify-content: space-between; align-items: center;
  background: linear-gradient(90deg, #47158f 0, #42139a 400px, #35119f 1100px, #2c0ba2 1900px, #2d0a90 2880px);
  color: #f0edf8; font-size: 26px; font-weight: 500; line-height: 46px;
}
.menus { display: flex; align-items: center; gap: 41px; padding-bottom: 2px; letter-spacing: -.4px; text-shadow: 0 2px 5px rgba(0, 0, 0, .35); }
.apple-logo { width: 27px; height: 32px; fill: #f0edf8; margin-right: -2px; }
.app-name { font-weight: 700; letter-spacing: 0; }
.status { display: flex; align-items: center; }
.wifi { margin-left: 36px; }
.search { margin-left: 36px; }
.control { margin-left: 35px; }
.siri {
  width: 28px; height: 28px; margin: 0 32px 0 34px; border-radius: 50%;
  background: radial-gradient(circle at 55% 50%, #fff 0 10%, rgba(255, 255, 255, 0) 38%),
    conic-gradient(#3c7a68, #3d9aa0 25%, #2a62b0 45%, #35206e 60%, #c13a5c 78%, #6a4560 90%, #3c7a68);
}
.clock { padding-bottom: 2px; white-space: nowrap; letter-spacing: .1px; }

/* Application window */
.window {
  position: absolute; left: 401px; top: 100px; width: 2399px; height: 1456px;
  border-radius: 20px; background: #80170e;
  box-shadow: 0 0 0 1.500px #050308, 0 36px 90px 10px rgba(0, 0, 0, .6);
  overflow: hidden; display: flex; flex-direction: column;
}
.window::after {
  content: ""; position: absolute; inset: 0; border-radius: 20px; pointer-events: none;
  box-shadow: inset 0 0 0 1.500px rgba(255, 255, 255, .2), inset 0 1px 0 1px rgba(255, 255, 255, .15);
}
.titlebar {
  height: 57px; background: #38343b; border-bottom: 1.500px solid #000; flex: none;
  display: grid; grid-template-columns: 1fr auto 1fr; align-items: center;
}
.titlebar h1 { margin: 0; font-size: 26px; font-weight: 700; letter-spacing: .1px; color: #b5b2b8; line-height: 32px; padding-bottom: 3px; }
.lights { display: flex; gap: 16px; padding-left: 15px; }
.lights i { width: 24px; height: 24px; border-radius: 50%; }
.close { background: #ed6a5e; }
.mini { background: #f5bf4f; }
.full { background: #5c585f; }

.client { flex: 1; display: flex; flex-direction: column; font-family: "Liberation Serif", serif; font-weight: 700; font-kerning: none; }
.top { height: 199px; display: flex; align-items: flex-start; padding-left: 13px; }
.stamp, .banner { background: #ece9e8; color: #fff; border-style: solid; border-color: #8d8b8a #fff #fff #8d8b8a; }
.stamp {
  width: 260px; height: 48px; margin-top: 19px; border-width: 8px; font-size: 24px; line-height: 36px;
  display: flex; justify-content: center; overflow: hidden; white-space: nowrap;
}
.banner {
  width: 860px; height: 100px; margin: 9px 0 0 446px; border-width: 10px;
  font-size: 60px; line-height: 88px; text-align: center; white-space: nowrap;
}
.db-wrap { width: 320px; height: 60px; margin: 19px 0 0 400px; padding: 12px 12px 8px; background: #333; }
.db { display: block; width: 100%; height: 40px; border-radius: 10px; background: #fff; color: #000; font-size: 24px; line-height: 38px; padding-right: 3px; }

.panels { display: flex; gap: 120px; padding-left: 29px; }
.ridge { height: 1100px; border: 4px solid; }
.ridge-in { height: 100%; border: 6px solid; }
.blue { width: 1000px; border-color: #8d8ab6 #0f0f3f #0f0f3f #8d8ab6; }
.blue .ridge-in { background: #18186a; border-color: #0f0f3f #8d8ab6 #8d8ab6 #0f0f3f; }
.white { width: 1200px; border-color: #fff #8c8a89 #8c8a89 #fff; }
.white .ridge-in { background: #fff; border-color: #8c8a89 #fff #fff #8c8a89; }

.options { display: flex; flex-direction: column; align-items: center; padding-top: 114px; }
.options h2 { margin: 0 0 132px; font-size: 48px; line-height: 60px; color: #ece9e8; padding-right: 2px; }
.buttons { display: flex; flex-direction: column; gap: 48px; }
.buttons button {
  width: 400px; height: 66px; border: 10px solid #323232; outline: 2px solid #b0afaf; outline-offset: -12px;
  background: linear-gradient(#e2e2e2, #f9f9f9); color: #80170e; font-size: 30px; line-height: 34px; padding: 6px 2px 0 0;
}

.tree { display: grid; grid-template-columns: 1150px 30px; grid-template-rows: 1050px 30px; }
.table { background: #1e1e1e; border-top: 2px solid #373737; }
.thead { height: 47px; border-bottom: 2px solid #3b3b3b; display: flex; padding: 4px 0 5px; color: #fff; font-size: 30px; line-height: 40px; }
.thead span { width: 400px; height: 36px; padding-left: 2px; text-align: center; border-right: 2px solid #3b3b3b; }
.thead .id { width: 199px; padding-left: 0; }
.vbar { background: #fafafa; border-left: 1px solid #e4e4e4; box-shadow: inset -2px 0 #fff, inset -4px 0 #ededed; }
.hbar { grid-column: span 2; background: #fafafa; border-top: 2px solid #e8e8e8; border-bottom: 1px solid #ededed; padding: 6px 8px; margin-right: 7px; }
.thumb { width: 436px; height: 16px; border-radius: 8px; background: #c6c6c6; }

/* Dock */
.dock {
  position: absolute; left: 58px; top: 1696px; width: 2763px; height: 94px;
  border: 2px solid rgba(150, 130, 190, .38); border-radius: 28px; padding: 0 0 0 13px;
  background: linear-gradient(90deg, #1f1436 0, #1e1435 700px, #211540 1000px, #26124d 1350px, #2c1256 1560px, #4f1578 1850px, #4b1672 2150px, #33145d 2420px, #231144 2640px, #221141 2763px);
  display: flex; align-items: flex-start; box-shadow: 0 0 0 1px rgba(0, 0, 0, .4);
}
.group { display: flex; gap: 18.630px; padding-top: 13px; }
.slot { position: relative; width: 58px; height: 78px; flex: none; }
.slot > svg { width: 58px; height: 58px; overflow: visible; filter: drop-shadow(0 1px 1px rgba(0, 0, 0, .3)); }
.slot > .wide { width: 62px; }
.slot > .tall { width: 60px; height: 62px; }
.slot > .over { width: 70px; height: 70px; margin: -6px 0 0 -4px; }
.slot > .over2 { height: 70px; margin-top: -6px; }
.run::after {
  content: ""; position: absolute; left: 25px; top: 67px; width: 8px; height: 8px; border-radius: 50%;
  background: #a68fc4;
}
.group + .rule + .group .run::after { background: #c390ee; }
.badge {
  position: absolute; left: 36px; top: -7px; width: 27px; height: 27px; border-radius: 50%;
  background: #e24d42; color: #fff; font-size: 17px; font-weight: 400; line-height: 27px; text-align: center;
}
.rule { width: 2px; height: 70px; margin-top: 10px; background: #6b5a86; flex: none; }
.r1 { margin-left: 27px; margin-right: 25px; }
.r2 { margin-left: 27px; margin-right: 18px; background: #8556ab; }
.thumbs { display: flex; align-items: center; gap: 8.600px; height: 68px; margin-top: 8px; }
.mini-win { position: relative; height: 68px; width: 68px; display: flex; align-items: center; }
.mark { position: absolute; right: 1px; top: 44px; width: 22px; height: 22px; }
.trash { margin: 8px 0 0 16px; }

.petals ellipse { mix-blend-mode: multiply; opacity: .92; }
.i-sep { font: 600 10.500px Inter, sans-serif; fill: #fff; }
.i-day { font: 300 33px Inter, sans-serif; fill: #222; letter-spacing: -1.500px; }
.i-tv { font: 500 27px Inter, sans-serif; fill: #fff; }
.i-uber { font: 600 6px Inter, sans-serif; fill: #fff; }
.i-serif { font: 600 5px "Liberation Serif", serif; fill: #222; }
.i-serif.big { font-size: 6px; }
.i-sans { font: 800 4.500px Inter, sans-serif; fill: #1c3c72; }
```
